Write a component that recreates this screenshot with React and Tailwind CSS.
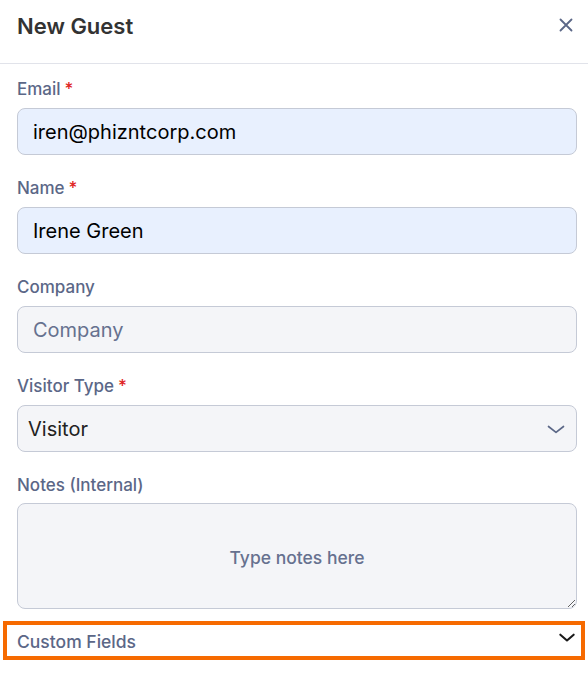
import { useState } from "react";

function Label({ children, required }) {
  return (
    <label className="block h-6 text-[17px] leading-6 font-medium text-[#5b6787]">
      {children}
      {required && <span className="ml-1 text-[#e02424]">*</span>}
    </label>
  );
}

export default function App() {
  const [email, setEmail] = useState("iren@phizntcorp.com");
  const [name, setName] = useState("Irene Green");
  const [company, setCompany] = useState("");
  const [notes, setNotes] = useState("");

  return (
    <div
      className="w-[588px] h-[675px] bg-white overflow-hidden"
      style={{ fontFamily: "Inter, 'Noto Sans', sans-serif" }}
    >
      {/* Header */}
      <div className="h-[64px] flex items-start justify-between pl-[17px] pr-[11px] pt-[12px] border-b border-[#e1e3ea]">
        <h2 className="text-[22px] leading-7 font-semibold text-[#333333]">New Guest</h2>
        <button className="mt-[2px] text-[#5b6787]">
          <svg width="22" height="22" viewBox="0 0 24 24" fill="none" stroke="currentColor" strokeWidth="2" strokeLinecap="round">
            <path d="M6 6l12 12M18 6L6 18" />
          </svg>
        </button>
      </div>

      <div className="pl-[17px] pr-[11px] pt-[13px]">
        {/* Email */}
        <div className="mb-[21px]">
          <Label required>Email</Label>
          <input
            value={email}
            onChange={(e) => setEmail(e.target.value)}
            className="mt-[7px] w-full h-[47px] px-[15px] rounded-lg border border-[#c5cad6] bg-[#e8f0fe] text-[20px] text-black outline-none"
          />
        </div>

        {/* Name */}
        <div className="mb-[21px]">
          <Label required>Name</Label>
          <input
            value={name}
            onChange={(e) => setName(e.target.value)}
            className="mt-[7px] w-full h-[47px] px-[15px] rounded-lg border border-[#c5cad6] bg-[#e8f0fe] text-[20px] text-black outline-none"
          />
        </div>

        {/* Company */}
        <div className="mb-[21px]">
          <Label>Company</Label>
          <input
            value={company}
            onChange={(e) => setCompany(e.target.value)}
            placeholder="Company"
            className="mt-[7px] w-full h-[47px] px-[15px] rounded-lg border border-[#c5cad6] bg-[#f4f5f8] text-[20px] text-black placeholder:text-[#66718f] outline-none"
          />
        </div>

        {/* Visitor type */}
        <div className="mb-[21px]">
          <Label required>Visitor Type</Label>
          <div className="mt-[7px] w-full h-[47px] pl-[10px] pr-[10px] rounded-lg border border-[#c5cad6] bg-[#f4f5f8] flex items-center justify-between">
            <span className="text-[20px] text-[#222222]">Visitor</span>
            <svg width="20" height="20" viewBox="0 0 24 24" fill="none" stroke="#5b6787" strokeWidth="2" strokeLinecap="round" strokeLinejoin="round">
              <path d="M3 9l9 7 9-7" />
            </svg>
          </div>
        </div>

        {/* Notes */}
        <div>
          <Label>Notes (Internal)</Label>
          <textarea
            value={notes}
            onChange={(e) => setNotes(e.target.value)}
            placeholder="Type notes here"
            className="mt-[6px] block w-full h-[106px] px-[15px] pt-[41px] rounded-lg border border-[#c5cad6] bg-[#f4f5f8] text-[17.5px] font-medium text-center text-black placeholder:text-[#66718f] outline-none"
          />
        </div>
      </div>

      {/* Custom fields */}
      <div className="ml-[3px] mr-[3px] mt-[12px] h-[39px] border-4 border-[#f66a00] flex items-center justify-between pl-[10px] pr-[4px]">
        <span className="text-[17.5px] text-[#5b6787] font-medium mt-[4px]">Custom Fields</span>
        <svg width="20" height="20" viewBox="0 0 24 24" fill="none" stroke="#1a1a1a" strokeWidth="2.5" strokeLinecap="round" strokeLinejoin="round" className="-mt-[6px]">
          <path d="M4 8l8 7 8-7" />
        </svg>
      </div>
    </div>
  );
}
